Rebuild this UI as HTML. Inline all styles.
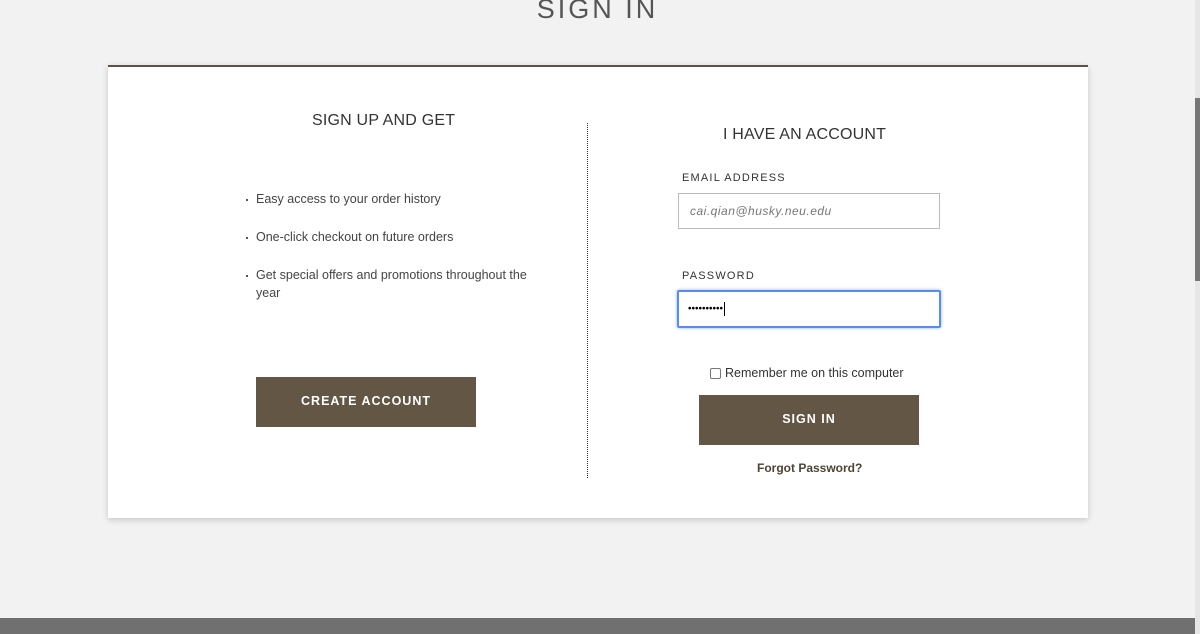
<!DOCTYPE html>
<html><head><meta charset="utf-8"><style>
*{margin:0;padding:0;box-sizing:border-box}
body{width:1200px;height:634px;background:#f2f2f2;font-family:"Liberation Sans",sans-serif;position:relative;overflow:hidden;color:#333}
.a{position:absolute}
.title{left:0;width:1195px;top:-8px;text-align:center;font-size:27px;letter-spacing:3px;color:#555;line-height:34px}
.card{left:108px;top:65px;width:980px;height:453px;background:#fff;border-top:2px solid #5e5246;box-shadow:0 2px 6px rgba(0,0,0,.18)}
.h{font-size:16px;color:#333;letter-spacing:.2px}
.li{font-size:12.5px;color:#444;line-height:18px}
.li:before{content:"";position:absolute;left:-10px;top:9px;width:2px;height:2px;background:#555}
.btn{background:#635645;color:#fff;font-weight:bold;font-size:12.5px;letter-spacing:1px;text-align:center}
.lbl{font-size:11px;letter-spacing:1.2px;color:#333}
</style></head><body>
<div class="a title">SIGN IN</div>
<div class="a card"></div>
<div class="a h" style="left:312px;top:112px">SIGN UP AND GET</div>
<div class="a li" style="left:256px;top:190px">Easy access to your order history</div>
<div class="a li" style="left:256px;top:228px">One-click checkout on future orders</div>
<div class="a li" style="left:256px;top:266px;width:285px">Get special offers and promotions throughout the year</div>
<div class="a btn" style="left:256px;top:377px;width:220px;height:50px;line-height:48px">CREATE ACCOUNT</div>
<div class="a" style="left:587px;top:123px;height:355px;border-left:1px dotted #333"></div>
<div class="a h" style="left:723px;top:126px">I HAVE AN ACCOUNT</div>
<div class="a lbl" style="left:682px;top:172px">EMAIL ADDRESS</div>
<div class="a" style="left:678px;top:193px;width:262px;height:36px;border:1px solid #bbb;font-size:12px;font-style:italic;color:#777;padding:10px 0 0 11px;letter-spacing:.5px">cai.qian@husky.neu.edu</div>
<div class="a lbl" style="left:682px;top:270px">PASSWORD</div>
<div class="a" style="left:677px;top:290px;width:264px;height:38px;border:2px solid #5b8de8;border-radius:2px;box-shadow:0 0 3px #8ab0f0;font-size:10px;color:#000;padding:10px 0 0 9px;letter-spacing:0">••••••••••<span style="display:inline-block;width:1px;height:14px;background:#000;vertical-align:middle;margin-left:1px"></span></div>
<div class="a" style="left:710px;top:368px;width:11px;height:11px;border:1px solid #777;border-radius:2px;background:#fff"></div>
<div class="a" style="left:725px;top:366px;font-size:12.5px;color:#333">Remember me on this computer</div>
<div class="a btn" style="left:699px;top:395px;width:220px;height:50px;line-height:48px">SIGN IN</div>
<div class="a" style="left:757px;top:461px;font-size:12px;font-weight:bold;color:#4e4335">Forgot Password?</div>
<div class="a" style="left:0;top:618px;width:1195px;height:16px;background:#707070"></div>
<div class="a" style="left:1195px;top:0;width:5px;height:634px;background:#e6e6e6"></div>
<div class="a" style="left:1195px;top:98px;width:5px;height:183px;background:#777"></div>
</body></html>
